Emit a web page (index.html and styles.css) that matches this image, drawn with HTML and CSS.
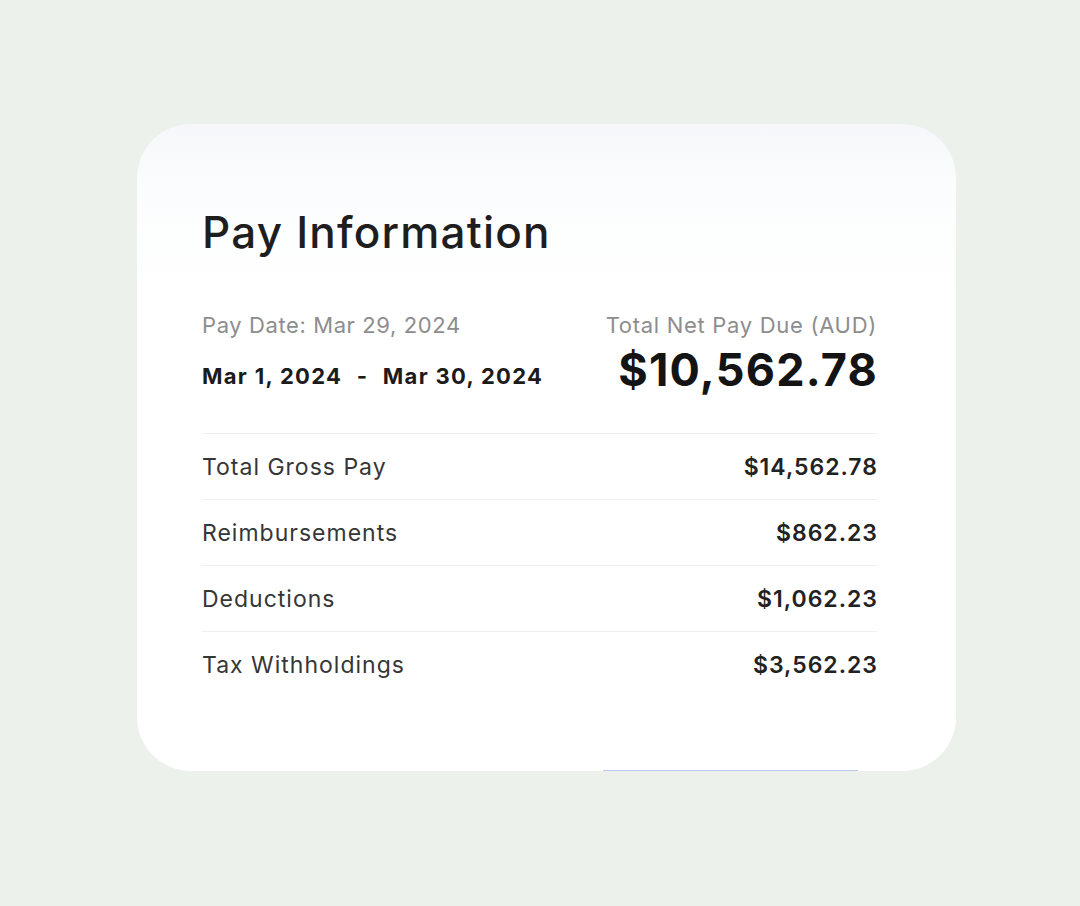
FILE: index.html
```html
<!DOCTYPE html>
<html lang="en">
<head>
    <meta charset="UTF-8">
    <meta name="viewport" content="width=device-width, initial-scale=1.0">
    <title>Pay Information</title>
    <link rel="stylesheet" href="styles.css">
</head>
<body>

<div class="card">
    <h1>Pay Information</h1>

    <div class="summary">
        <div class="period">
            <div class="muted">Pay Date: Mar 29, 2024</div>
            <div class="range">Mar 1, 2024 <span class="dash">-</span> Mar 30, 2024</div>
        </div>
        <div class="net">
            <div class="muted">Total Net Pay Due (AUD)</div>
            <div class="net-amount">$10,562.78</div>
        </div>
    </div>

    <div class="rows">
        <div class="row">
            <span class="label">Total Gross Pay</span>
            <span class="value">$14,562.78</span>
        </div>
        <div class="row">
            <span class="label">Reimbursements</span>
            <span class="value">$862.23</span>
        </div>
        <div class="row">
            <span class="label">Deductions</span>
            <span class="value">$1,062.23</span>
        </div>
        <div class="row">
            <span class="label">Tax Withholdings</span>
            <span class="value">$3,562.23</span>
        </div>
    </div>
</div>

</body>
</html>
```

FILE: styles.css
```css
body {
    font-family: Inter, "Noto Sans", sans-serif;
    background-color: #ecf1eb;
    margin: 0;
    padding: 124px 0 0 137px;
}
.card {
    position: relative;
    width: 819px;
    height: 647px;
    box-sizing: border-box;
    padding: 82px 79px 0 65px;
    border-radius: 54px;
    background: linear-gradient(180deg, #f5f7fa 0, #fbfcfd 60px, #fff 160px);
}
/* thin blue edge peeking under the card */
.card::after {
    content: "";
    position: absolute;
    left: 466px;
    bottom: -1px;
    width: 255px;
    height: 2px;
    background-color: #bcc6f2;
}
.card h1 {
    margin: 0;
    font-size: 44px;
    font-weight: 500;
    line-height: 1.2;
    color: #1e1e1e;
    letter-spacing: 1.2px;
}
.summary {
    display: flex;
    justify-content: space-between;
    align-items: flex-start;
    margin-top: 53px;
    padding-bottom: 36px;
}
.muted {
    font-size: 22px;
    line-height: 1.2;
    color: #8d8d8d;
    letter-spacing: 0.6px;
}
.net .muted {
    letter-spacing: 0.7px;
}
.range {
    margin-top: 25px;
    font-size: 22px;
    line-height: 1.2;
    font-weight: 700;
    color: #1b1b1b;
    letter-spacing: 1.3px;
}
.range .dash {
    margin: 0 8px;
}
.net {
    text-align: right;
}
.net-amount {
    margin-top: 5px;
    font-size: 45px;
    line-height: 1.2;
    font-weight: 700;
    color: #141414;
    letter-spacing: 1.2px;
    margin-right: -1px;
}
.row {
    height: 66px;
    box-sizing: border-box;
    display: flex;
    align-items: center;
    justify-content: space-between;
    border-top: 1px solid #efefef;
}
.label {
    font-size: 23px;
    color: #363636;
    letter-spacing: 1px;
}
.value {
    font-size: 23px;
    font-weight: 600;
    color: #222;
    letter-spacing: 1px;
    margin-right: -1px;
}
```
